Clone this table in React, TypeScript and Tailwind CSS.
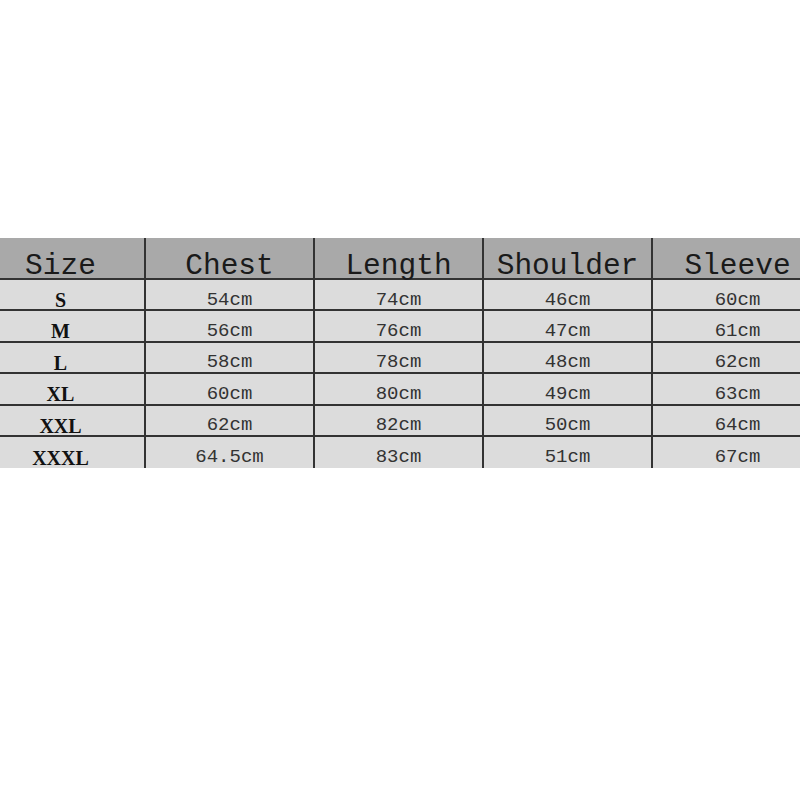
import React from 'react';

const headers = ['Size', 'Chest', 'Length', 'Shoulder', 'Sleeve'];

const rows = [
  ['S', '54cm', '74cm', '46cm', '60cm'],
  ['M', '56cm', '76cm', '47cm', '61cm'],
  ['L', '58cm', '78cm', '48cm', '62cm'],
  ['XL', '60cm', '80cm', '49cm', '63cm'],
  ['XXL', '62cm', '82cm', '50cm', '64cm'],
  ['XXXL', '64.5cm', '83cm', '51cm', '67cm'],
];

const mono = { fontFamily: '"Liberation Mono", "DejaVu Sans Mono", monospace' };

const App: React.FC = () => {
  return (
    <div className="w-[800px] h-[800px] bg-white overflow-hidden pt-[238px]">
      {/* table is wider than the picture, cropped on both sides */}
      <div className="w-[845px] -ml-[23px]">
        <div className="grid grid-cols-[169px_169px_169px_169px_169px] h-[42px] bg-[#a9a9a9] border-b-2 border-[#333]">
          {headers.map((h, i) => (
            <div
              key={h}
              className={`flex items-center justify-center pt-[14px] text-[29.5px] leading-none text-[#1a1a1a] ${i < 4 ? 'border-r-2 border-[#333]' : ''}`}
              style={mono}
            >
              {h}
            </div>
          ))}
        </div>

        {rows.map((row, r) => (
          <div
            key={row[0]}
            className={`grid grid-cols-[169px_169px_169px_169px_169px] h-[31.4px] bg-[#dcdcdc] ${r < rows.length - 1 ? 'border-b-2 border-[#333]' : ''}`}
          >
            {row.map((cell, i) => (
              <div
                key={i}
                className={`flex items-center justify-center pt-[10px] leading-none text-[#333] ${i < 4 ? 'border-r-2 border-[#333]' : ''}`}
              >
                {i === 0 ? (
                  <span className="text-[20px] font-bold text-[#111]" style={{ fontFamily: '"Liberation Serif", "Times New Roman", serif' }}>
                    {cell}
                  </span>
                ) : (
                  <span className="text-[19px]" style={mono}>
                    {cell}
                  </span>
                )}
              </div>
            ))}
          </div>
        ))}
      </div>
    </div>
  );
};

export default App;
